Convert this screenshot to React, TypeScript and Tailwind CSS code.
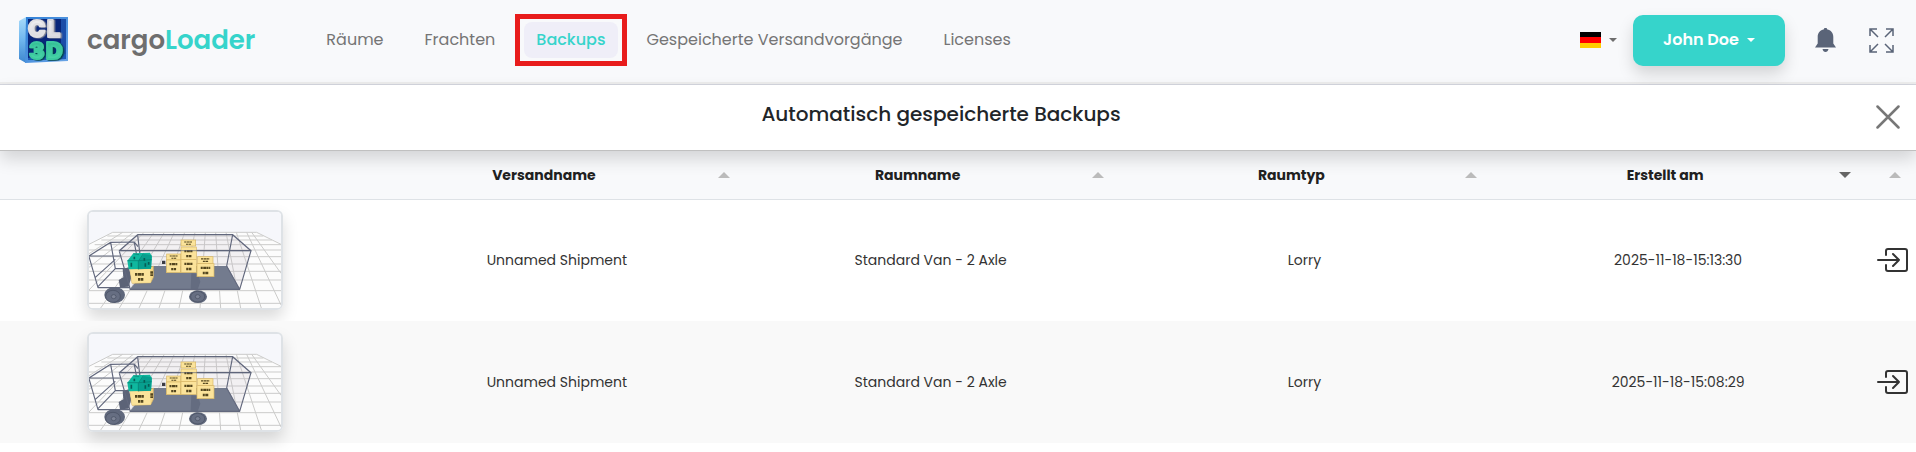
import React from "react";

type Backup = { shipment: string; room: string; type: string; created: string };

const backups: Backup[] = [
  { shipment: "Unnamed Shipment", room: "Standard Van - 2 Axle", type: "Lorry", created: "2025-11-18-15:13:30" },
  { shipment: "Unnamed Shipment", room: "Standard Van - 2 Axle", type: "Lorry", created: "2025-11-18-15:08:29" },
];

const navItems = ["Räume", "Frachten", "Backups", "Gespeicherte Versandvorgänge", "Licenses"];
const columns = ["Versandname", "Raumname", "Raumtyp", "Erstellt am"];

function Logo() {
  return (
    <svg viewBox="0 0 49 48" className="h-12 w-[49px]" aria-hidden="true">
      <defs>
        <linearGradient id="side" x1="0" y1="0" x2="0" y2="1">
          <stop offset="0" stopColor="#a9dbfa" />
          <stop offset="0.5" stopColor="#6fb6ee" />
          <stop offset="1" stopColor="#3d86cf" />
        </linearGradient>
        <linearGradient id="frame" x1="0" y1="0" x2="1" y2="1">
          <stop offset="0" stopColor="#2f7fd6" />
          <stop offset="1" stopColor="#6aa5e6" />
        </linearGradient>
        <linearGradient id="silver" x1="0" y1="0" x2="0" y2="1">
          <stop offset="0" stopColor="#f4f4f6" />
          <stop offset="1" stopColor="#d3d4da" />
        </linearGradient>
        <linearGradient id="mint" x1="0" y1="0" x2="0" y2="1">
          <stop offset="0" stopColor="#2fb98f" />
          <stop offset="1" stopColor="#4fdcae" />
        </linearGradient>
        <filter id="depth" x="-20%" y="-20%" width="150%" height="150%">
          <feDropShadow dx="1.500" dy="0.800" stdDeviation="0.300" floodColor="#06403f" floodOpacity="0.900" />
        </filter>
        <filter id="depthGrey" x="-20%" y="-20%" width="150%" height="150%">
          <feDropShadow dx="1.500" dy="0.500" stdDeviation="0.300" floodColor="#8b8e99" />
        </filter>
      </defs>
      <path d="M0 5 7 1V47L0 43Z" fill="url(#side)" />
      <path d="M7 1H49V45L6 47Z" fill="url(#frame)" />
      <path d="M9 3H47V43L9 44Z" fill="#08267a" />
      <path d="M42 3H47V43H42Z" fill="#1b4da8" />
      <path d="M9 42 28 38H47V43L9 44Z" fill="#1b58b8" />
      <g fontFamily="Inter, sans-serif" fontWeight="900" fontSize="23" strokeWidth="2" strokeLinejoin="round">
        <text x="9" y="21" fill="url(#silver)" stroke="#e0e0e4" filter="url(#depthGrey)">C</text>
        <text x="28" y="21" fill="url(#silver)" stroke="#d8d9de" filter="url(#depthGrey)">L</text>
        <text x="10" y="43" fill="url(#mint)" stroke="#3cc9a0" filter="url(#depth)">3</text>
        <text x="27" y="43" fill="url(#mint)" stroke="#3cc9a0" filter="url(#depth)">D</text>
      </g>
    </svg>
  );
}

function Crate({ x, y, w, h }: { x: number; y: number; w: number; h: number }) {
  return (
    <g>
      <rect x={x} y={y} width={w} height={h} fill="#fbe39a" stroke="#d9b765" strokeWidth="2" />
      <path d={`M${x + w * 0.22} ${y + h * 0.32}h${w * 0.56}M${x + w * 0.34} ${y + h * 0.72}h${w * 0.34}`} stroke="#53461f" strokeWidth={h * 0.18} strokeDasharray="6 1.5 9 1" />
    </g>
  );
}

function VanPreview() {
  return (
    <svg viewBox="57 66 576 288" preserveAspectRatio="none" className="block h-24 w-48" role="img" aria-label="Standard Van">
      <rect x="57" y="66" width="576" height="288" fill="#f6f7fb" />
      <path d="M128 127H560L633 160V354H57V163Z" fill="#fcfcfc" />
      <g stroke="#cbcbca" strokeWidth="3" fill="none">
        <path d="M128 127H560M112 138H580M94 150H606M74 164H633M57 180H633M57 200H633M57 222H633M57 244H633M57 270H633M57 302H633M57 340H633" />
        <path d="M128 127 57 163M158 127 57 191M190 127 57 232M222 127 57 300M252 127 92 354M283 127 148 354M313 127 207 354M344 127 267 354M375 127 327 354M406 127 390 354M437 127 452 354M468 127 512 354M499 127 574 354M530 127 633 345M545 127 633 250M560 127 633 163" />
      </g>
      <path d="M203 136 488 134 543 182 509 300 470 228H235L181 300 148 184Z" fill="#b7a9b5" opacity="0.14" />
      <path d="M236 228H471L510 300H178Z" fill="#737b8e" />
      <path d="M158 238 176 232 184 262 176 290 150 292 146 270 160 262Z" fill="#5c6377" />
      <path d="M364 250 384 252 391 275 382 302 362 296Z" fill="#646c80" />
      <g stroke="#62687d" strokeWidth="3.5" fill="none" strokeLinejoin="round">
        <path d="M203 134H488L543 182H148Z" strokeWidth="4" />
        <path d="M148 184 181 298H509L543 182M203 136 214 228M488 134 470 228 509 298" />
        <path d="M57 198 122 157 193 156 204 170M57 198H152M57 200 84 293H180M122 157 136 236 168 236M76 262 136 208M84 290 136 236M193 158 206 228" />
      </g>
      <path d="M276 212h10v10h-10z" fill="#3b3b43" />
      <g>
        <path d="M180 238 232 236 250 228 250 262 242 278 186 280Z" fill="#f4d585" stroke="#d9b765" strokeWidth="2" />
        <path d="M180 238H240L242 278H186Z" fill="#fbe39a" />
        <path d="M195 253h28M204 268h16M245 244v14" stroke="#53461f" strokeWidth="8" strokeDasharray="7 1.5 10 1" />
        <path d="M172 212 190 190 240 188 246 200 243 236 176 238Z" fill="#0fb89f" />
        <path d="M206 212 222 192 245 196 243 236 204 238Z" fill="#079f8e" />
        <path d="M172 212H206L220 191M205 213V238M190 191 207 194M206 212 245 209" stroke="#067a6e" strokeWidth="2" fill="none" />
        <path d="M184 218v12M193 200v8M223 204v8M226 220v10M236 216v8" stroke="#065e56" strokeWidth="5" />
      </g>
      <Crate x={333} y={150} w={44} h={18} />
      <Crate x={333} y={171} w={46} h={38} />
      <Crate x={290} y={192} w={42} h={18} />
      <Crate x={289} y={210} w={43} h={38} />
      <Crate x={333} y={209} w={46} h={39} />
      <Crate x={383} y={200} w={46} h={20} />
      <Crate x={381} y={221} w={51} h={39} />
      <path d="M148 182H543" stroke="#5d6479" strokeWidth="3" opacity="0.7" />
      <g fill="#5f677b">
        <ellipse cx="134" cy="315" rx="31" ry="24" />
        <ellipse cx="384" cy="320" rx="27" ry="19" />
      </g>
      <g fill="#7d8496" stroke="#474e61" strokeWidth="2">
        <ellipse cx="129" cy="319" rx="22" ry="18" fill="#666e82" />
        <ellipse cx="131" cy="320" rx="7" ry="6" />
        <ellipse cx="383" cy="320" rx="21" ry="16" fill="#666e82" />
        <ellipse cx="383" cy="320" rx="7" ry="6" />
      </g>
    </svg>
  );
}

function GermanFlag() {
  return (
    <svg viewBox="0 0 21 16" className="h-4 w-[21px]" aria-hidden="true">
      <path d="M0 0h21v16H0z" fill="#ffce00" />
      <path d="M0 0h21v11H0z" fill="#f00" />
      <path d="M0 0h21v5H0z" fill="#000" />
    </svg>
  );
}

function Caret() {
  return (
    <svg viewBox="0 0 8 4" className="h-1 w-2" aria-hidden="true">
      <path d="M0 0h8L4 4z" fill="currentColor" />
    </svg>
  );
}

function SortArrow({ down = false }: { down?: boolean }) {
  return (
    <svg viewBox="0 0 12 6" className="h-1.5 w-3 shrink-0" aria-hidden="true">
      <path d={down ? "M0 0h12L6 6z" : "M0 6h12L6 0z"} fill={down ? "#666" : "#bbb"} />
    </svg>
  );
}

export default function App() {
  return (
    <div className="min-h-screen bg-white font-[Poppins,Inter,sans-serif] text-[#333]">
      <header className="flex h-[85px] items-center border-b border-[#d4d6de] bg-[#f8f9fb] pr-[22px] pb-1 pl-[19px] shadow-[inset_0_-2px_0_#ededed]">
        <a href="#" className="flex items-center gap-[19px]">
          <Logo />
          <span className="text-[26px] leading-9 font-semibold text-[#6e6e6e]">
            cargo<span className="text-[#36d4cb]">Loader</span>
          </span>
        </a>
        <nav className="ml-[59px] flex items-center gap-[17px] text-base text-[#757575]">
          {navItems.map((item) =>
            item === "Backups" ? (
              <a key={item} href="#" aria-current="page" className="relative rounded-lg bg-[#efeef8] px-3 py-1.5 font-medium text-[#36d4cb]">
                {item}
                <span className="absolute -inset-x-[9px] -inset-y-2 border-5 border-[#e81c1c]" />
              </a>
            ) : (
              <a key={item} href="#" className="px-3 py-1.5">{item}</a>
            )
          )}
        </nav>
        <div className="ml-auto flex items-center">
          <button aria-label="Sprache" className="flex items-center gap-2 text-[#6e6e6e]">
            <GermanFlag />
            <Caret />
          </button>
          <button className="ml-4 flex h-[51px] w-[152px] items-center justify-center gap-2 rounded-[10px] bg-[#36d4cb] text-base font-semibold text-white shadow-[0_8px_16px_rgba(0,0,0,0.15)]">
            John Doe
            <Caret />
          </button>
          <button aria-label="Benachrichtigungen" className="ml-[30px] text-[#5a6478]">
            <svg viewBox="0 0 21 24" className="h-6 w-[21px]" fill="currentColor" aria-hidden="true">
              <path d="M9 1.200a1.500 1.500 0 0 1 3 0C16 2 18.300 5 18.300 9V15.500L21 19.500H0L2.700 15.500V9C2.700 5 5 2 9 1.200ZM7.500 21h6c-.4 1.800-1.500 3-3 3s-2.600-1.200-3-3Z" />
            </svg>
          </button>
          <button aria-label="Vollbild" className="ml-[33px] text-[#5a6478]">
            <svg viewBox="0 0 25 25" className="size-[25px]" fill="none" stroke="currentColor" strokeWidth="1.500" aria-hidden="true">
              <path d="M1 8V1H8M1 1 9 9M17 1h7V8M24 1 16 9M1 17v7H8M1 24 9 16M24 17v7H17M24 24 16 16" />
            </svg>
          </button>
        </div>
      </header>
      <main>
        <div className="relative z-10 flex h-[66px] items-center border-b border-[#c0c0c0] bg-white shadow-[0_8px_16px_rgba(0,0,0,0.15)]">
          <h1 className="flex-1 pb-2 pl-1.5 text-center text-xl font-medium text-[#212529]">Automatisch gespeicherte Backups</h1>
          <button aria-label="Schließen" className="mr-4 pb-0.5 text-[#777]">
            <svg viewBox="0 0 24 24" className="size-6" stroke="currentColor" strokeWidth="2.500" strokeLinecap="round" aria-hidden="true">
              <path d="M1.500 1.500l21 21M22.500 1.500l-21 21" />
            </svg>
          </button>
        </div>
        <table className="w-full table-fixed text-center text-sm">
          <colgroup>
            <col className="w-[370px]" />
            <col />
            <col />
            <col />
            <col />
            <col className="w-[51px]" />
          </colgroup>
          <thead>
            <tr className="h-12 border-b border-[#dee2e6] bg-[#f8f9fb] text-[#212121]">
              <th aria-label="Vorschau" />
              {columns.map((name) => (
                <th key={name} className="pr-3.5 font-bold">
                  <div className="flex items-center">
                    <span className="flex-1">{name}</span>
                    <SortArrow down={name === "Erstellt am"} />
                  </div>
                </th>
              ))}
              <th aria-label="Öffnen" className="pl-6">
                <SortArrow />
              </th>
            </tr>
          </thead>
          <tbody>
            {backups.map((b) => (
              <tr key={b.created} className="h-[122px] even:bg-[#f9f9f9]">
                <td>
                  <div className="mx-auto w-fit overflow-hidden rounded-md border-2 border-[#dee2e6] shadow-[0_8px_16px_rgba(0,0,0,0.15)]">
                    <VanPreview />
                  </div>
                </td>
                <td>{b.shipment}</td>
                <td>{b.room}</td>
                <td>{b.type}</td>
                <td>{b.created}</td>
                <td>
                  <button aria-label="Backup öffnen" className="ml-3 block">
                    <svg viewBox="0 0 31 24" className="h-6 w-[31px]" fill="none" stroke="#333" strokeWidth="2" strokeLinecap="round" strokeLinejoin="round" aria-hidden="true">
                      <path d="M9 7V3a2 2 0 0 1 2-2H28a2 2 0 0 1 2 2v18A2 2 0 0 1 28 23H11a2 2 0 0 1-2-2V17M1 12H22M16 6l6 6-6 6" />
                    </svg>
                  </button>
                </td>
              </tr>
            ))}
          </tbody>
        </table>
      </main>
    </div>
  );
}
